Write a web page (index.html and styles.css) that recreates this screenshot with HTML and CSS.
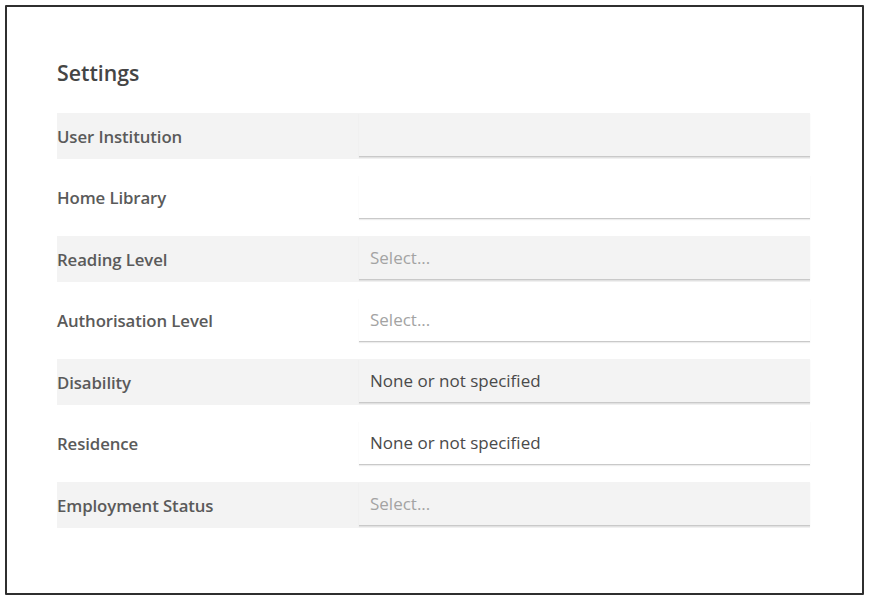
FILE: index.html
```html
<!DOCTYPE html>
<html>
<head>
<meta charset="utf-8">
<link rel="stylesheet" href="styles.css">
</head>
<body>
<div class="frame">
  <h1 class="title">Settings</h1>
  <div class="form">
    <div class="row shaded">
      <div class="label">User Institution</div>
      <div class="field"></div>
    </div>
    <div class="row">
      <div class="label">Home Library</div>
      <div class="field"></div>
    </div>
    <div class="row shaded">
      <div class="label">Reading Level</div>
      <div class="field placeholder">Select...</div>
    </div>
    <div class="row">
      <div class="label">Authorisation Level</div>
      <div class="field placeholder">Select...</div>
    </div>
    <div class="row shaded">
      <div class="label">Disability</div>
      <div class="field">None or not specified</div>
    </div>
    <div class="row">
      <div class="label">Residence</div>
      <div class="field">None or not specified</div>
    </div>
    <div class="row shaded">
      <div class="label">Employment Status</div>
      <div class="field placeholder">Select...</div>
    </div>
  </div>
</div>
</body>
</html>
```
FILE: styles.css
```css
html, body {
  margin: 0;
  padding: 0;
  background: #ffffff;
}

body {
  font-family: "Open Sans", "Noto Sans", sans-serif;
}

.frame {
  box-sizing: border-box;
  margin: 5px 0 0 5px;
  width: 859px;
  height: 590px;
  border: 2px solid #2f2f2f;
  border-radius: 1px;
  padding: 53px 0 0 50px;
}

.title {
  margin: 0 0 27px 0;
  font-size: 21.3px;
  line-height: 26px;
  font-weight: 600;
  color: #454545;
}

.form {
  width: 753px;
  display: flex;
  flex-direction: column;
  gap: 15.5px;
}

.row {
  display: grid;
  grid-template-columns: 302px 451px;
  height: 46px;
  align-items: center;
}

.row.shaded {
  background: #f3f3f3;
}

.label {
  font-size: 16.8px;
  font-weight: 600;
  color: #5a5a5a;
  letter-spacing: -0.1px;
}

.field {
  box-sizing: border-box;
  align-self: stretch;
  margin-bottom: 2px;
  border-bottom: 1px solid #c9c9c9;
  box-shadow: 0 1px 1px rgba(0, 0, 0, 0.07);
  padding-left: 11px;
  display: flex;
  align-items: center;
  font-size: 17px;
  color: #4a4a4a;
}

.field.placeholder {
  color: #a3a3a3;
}
```
